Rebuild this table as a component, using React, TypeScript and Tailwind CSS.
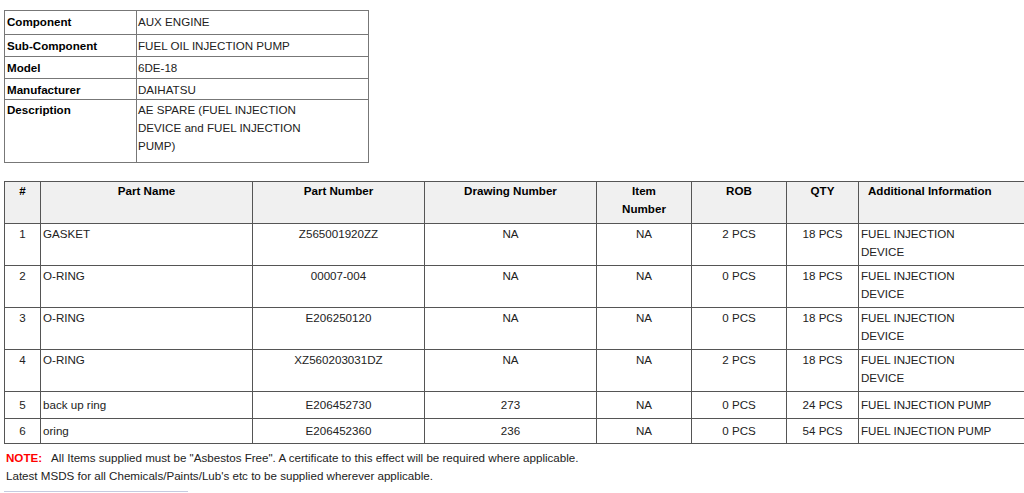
import React from "react";

const info: [string, React.ReactNode, string][] = [
  ["Component", "AUX ENGINE", "h-[24px]"],
  ["Sub-Component", "FUEL OIL INJECTION PUMP", "h-[22px]"],
  ["Model", "6DE-18", "h-[22px]"],
  ["Manufacturer", "DAIHATSU", "h-[21px]"],
];

type Row = {
  n: string;
  name: string;
  part: string;
  draw: string;
  item: string;
  rob: string;
  qty: string;
  add: React.ReactNode;
  h: string;
  c: string;
};

const dev = (
  <>
    FUEL INJECTION
    <br />
    DEVICE
  </>
);

const tall = "align-top pt-[1px] pb-[4px]";
const short = "align-middle pt-[2px] pb-[2px]";

const rows: Row[] = [
  { n: "1", name: "GASKET", part: "Z565001920ZZ", draw: "NA", item: "NA", rob: "2 PCS", qty: "18 PCS", add: dev, h: "h-[42px]", c: tall },
  { n: "2", name: "O-RING", part: "00007-004", draw: "NA", item: "NA", rob: "0 PCS", qty: "18 PCS", add: dev, h: "h-[42px]", c: tall },
  { n: "3", name: "O-RING", part: "E206250120", draw: "NA", item: "NA", rob: "0 PCS", qty: "18 PCS", add: dev, h: "h-[42px]", c: tall },
  { n: "4", name: "O-RING", part: "XZ560203031DZ", draw: "NA", item: "NA", rob: "2 PCS", qty: "18 PCS", add: dev, h: "h-[42px]", c: tall },
  { n: "5", name: "back up ring", part: "E206452730", draw: "273", item: "NA", rob: "0 PCS", qty: "24 PCS", add: "FUEL INJECTION PUMP", h: "h-[27px]", c: short },
  { n: "6", name: "oring", part: "E206452360", draw: "236", item: "NA", rob: "0 PCS", qty: "54 PCS", add: "FUEL INJECTION PUMP", h: "h-[25px]", c: short },
];

export default function App() {
  const td = "border border-[#555] leading-[18px]";
  const th = "border border-[#555] align-top pt-0 pb-[4px] leading-[18px] font-bold text-black bg-[#f0f0f0]";
  return (
    <div
      className="bg-white min-h-[493px] pt-[10px] pl-[4px] text-[11.6px] text-[#222] overflow-hidden"
      style={{ fontFamily: '"Liberation Sans", Arial, sans-serif' }}
    >
      <table className="border-collapse table-fixed w-[364px] border border-[#666]">
        <colgroup>
          <col className="w-[132px]" />
          <col className="w-[232px]" />
        </colgroup>
        <tbody>
          {info.map(([k, v, h]) => (
            <tr key={k} className={h}>
              <td className="border border-[#777] align-top pt-[2px] pb-0 pl-[2px] leading-[18px] font-bold text-black">
                {k}
              </td>
              <td className="border border-[#777] align-top pt-[2px] pb-0 pl-[1px] leading-[18px]">{v}</td>
            </tr>
          ))}
          <tr className="h-[63px]">
            <td className="border border-[#777] align-top pt-[1px] pl-[2px] leading-[18px] font-bold text-black">
              Description
            </td>
            <td className="border border-[#777] align-top pt-[1px] pl-[1px] leading-[18px]">
              AE SPARE (FUEL INJECTION
              <br />
              DEVICE and FUEL INJECTION
              <br />
              PUMP)
            </td>
          </tr>
        </tbody>
      </table>

      <table className="mt-[18px] border-collapse table-fixed w-[1030px] border border-[#333]">
        <colgroup>
          <col className="w-[36px]" />
          <col className="w-[212px]" />
          <col className="w-[172px]" />
          <col className="w-[172px]" />
          <col className="w-[95px]" />
          <col className="w-[95px]" />
          <col className="w-[72px]" />
          <col className="w-[176px]" />
        </colgroup>
        <thead>
          <tr className="h-[42px]">
            <th className={`${th} text-center`}>#</th>
            <th className={`${th} text-center`}>Part Name</th>
            <th className={`${th} text-center`}>Part Number</th>
            <th className={`${th} text-center`}>Drawing Number</th>
            <th className={`${th} text-center`}>
              Item
              <br />
              Number
            </th>
            <th className={`${th} text-center`}>ROB</th>
            <th className={`${th} text-center`}>QTY</th>
            <th className={`${th} text-left pl-[9px]`}>Additional Information</th>
          </tr>
        </thead>
        <tbody>
          {rows.map((r) => (
            <tr key={r.n} className={r.h}>
              <td className={`${td} ${r.c} text-center`}>{r.n}</td>
              <td className={`${td} ${r.c} pl-[2px]`}>{r.name}</td>
              <td className={`${td} ${r.c} text-center`}>{r.part}</td>
              <td className={`${td} ${r.c} text-center`}>{r.draw}</td>
              <td className={`${td} ${r.c} text-center`}>{r.item}</td>
              <td className={`${td} ${r.c} text-center`}>{r.rob}</td>
              <td className={`${td} ${r.c} text-center`}>{r.qty}</td>
              <td className={`${td} ${r.c} pl-[2px]`}>{r.add}</td>
            </tr>
          ))}
        </tbody>
      </table>

      <div className="mt-[5px] pl-[2px] leading-[18px]">
        <div>
          <span className="text-[#ff0000] font-bold">NOTE:</span>
          <span className="pl-[9px]">
            All Items supplied must be "Asbestos Free". A certificate to this effect will be required where applicable.
          </span>
        </div>
        <div>Latest MSDS for all Chemicals/Paints/Lub's etc to be supplied wherever applicable.</div>
      </div>
      <div className="mt-[6px] w-[184px] h-[1px] bg-[#c5cbe0]" />
    </div>
  );
}
